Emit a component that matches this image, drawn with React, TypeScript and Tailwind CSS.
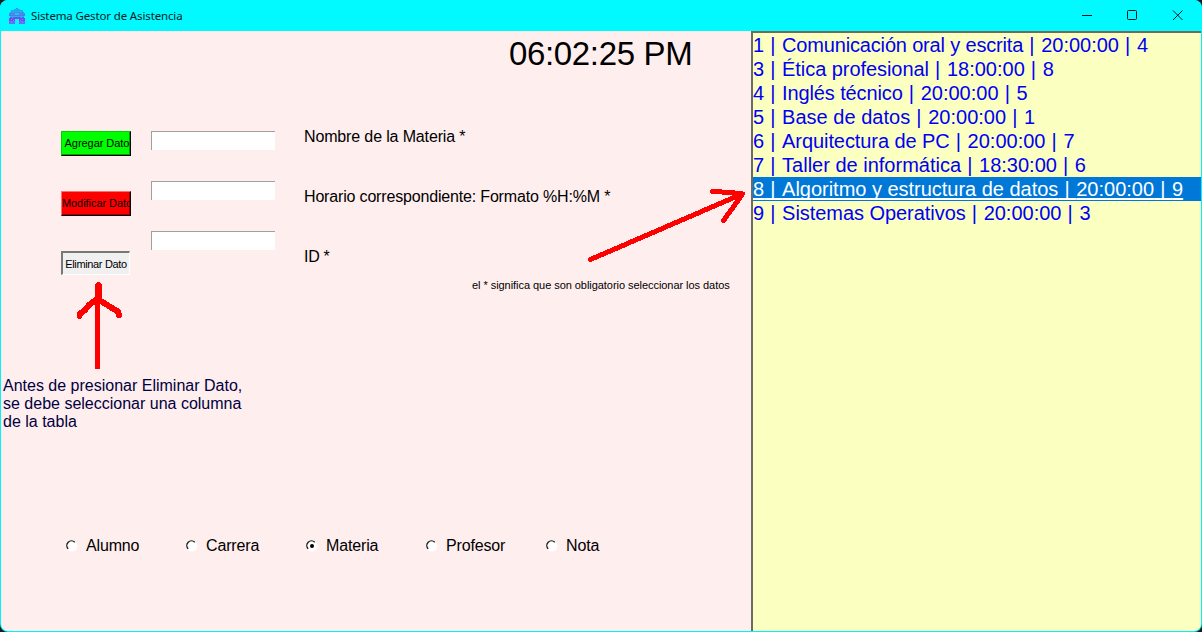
import React from "react";

type TextProps = { children: React.ReactNode; className?: string };

const Line = ({ children, className = "" }: TextProps) => (
  <div className={`whitespace-nowrap ${className}`}>{children}</div>
);

const AppIcon = () => (
  <svg width="16" height="16" viewBox="0 0 16 16" shapeRendering="crispEdges">
    <path fill="#159fe8" d="M7 0h2v1h-2z" />
    <path fill="#2fa4ee" d="M5 1h6v1H5zM2 2h12v2H2z" />
    <path fill="#3f8fe6" d="M1 4h14v1H1zM0 5h6v2H0zM10 5h6v2h-6z" />
    <path fill="#1bc4f5" d="M6 5h4v2H6zM4 3h1v1H4zM11 3h1v1h-1z" />
    <path fill="#4b7de6" d="M0 7h16v1H0z" />
    <path fill="#18b8ef" d="M1 8h14v1H1z" />
    <path fill="#6a55ef" d="M1 9h14v1H1z" />
    <path fill="#7f43f6" d="M0 10h16v1H0zM0 11h6v2H0zM10 11h6v2h-6z" />
    <path fill="#6f6af8" d="M0 13h6v3H0zM10 13h6v3h-6z" />
    <path fill="#26b3f4" d="M2 11h1v1H2zM13 11h1v1h-1zM4 12h1v1H4zM11 12h1v1h-1zM2 14h1v1H2zM13 14h1v1h-1zM3 9h1v1H3zM12 9h1v1h-1z" />
  </svg>
);

const TitleBar = () => (
  <header className="flex h-[31px] shrink-0 items-center bg-[#00faff] pl-[9px]">
    <AppIcon />
    <Line className="ml-[6px] font-['Noto_Sans','Open_Sans',sans-serif] text-[11.5px] tracking-[-0.14px] text-[#051c1d]">
      Sistema Gestor de Asistencia
    </Line>
    <svg className="ml-auto" width="138" height="31" viewBox="0 0 138 31" fill="none" stroke="#00181a">
      <path d="M18 15.5h10" />
      <rect x="63.5" y="10.5" width="9" height="9" rx="1" />
      <path d="M109 10.500l9.500 9.500M118.500 10.500l-9.500 9.500" />
    </svg>
  </header>
);

const ActionButton = ({ label, className }: { label: string; className: string }) => (
  <button
    className={`flex items-center justify-center overflow-hidden whitespace-nowrap text-[11px] leading-none ${className}`}
  >
    {label}
  </button>
);

const Entry = () => (
  <input className="h-[19px] w-[124px] border-t border-l border-[#a0a0a0] bg-white outline-none" />
);

const Radio = ({ label, checked }: { label: string; checked?: boolean }) => (
  <label className="flex h-[18px] w-[120px] items-center">
    <svg width="12" height="12" viewBox="0 0 12 12" className="mr-[8px]">
      <circle cx="6" cy="6" r="5.500" fill="#fff" />
      <path d="M2.200 8.800A4.600 4.600 0 0 1 8.800 2.200" fill="none" stroke="#1c1c1c" strokeWidth="1.400" />
      {checked && <circle cx="6" cy="6" r="2" fill="#000" />}
    </svg>
    <span className="text-[16px] leading-[18px] tracking-[-0.15px]">{label}</span>
  </label>
);

type Subject = { id: number; name: string; time: string; teacher: number; tracking: string };

const subjects: Subject[] = [
  { id: 1, name: "Comunicación oral y escrita", time: "20:00:00", teacher: 4, tracking: "tracking-[-0.17px]" },
  { id: 3, name: "Ética profesional", time: "18:00:00", teacher: 8, tracking: "tracking-[-0.06px]" },
  { id: 4, name: "Inglés técnico", time: "20:00:00", teacher: 5, tracking: "tracking-[-0.12px]" },
  { id: 5, name: "Base de datos", time: "20:00:00", teacher: 1, tracking: "tracking-[0.02px]" },
  { id: 6, name: "Arquitectura de PC", time: "20:00:00", teacher: 7, tracking: "tracking-[-0.08px]" },
  { id: 7, name: "Taller de informática", time: "18:30:00", teacher: 6, tracking: "tracking-[0px]" },
  { id: 8, name: "Algoritmo y estructura de datos", time: "20:00:00", teacher: 9, tracking: "tracking-[-0.02px]" },
  { id: 9, name: "Sistemas Operativos", time: "20:00:00", teacher: 3, tracking: "tracking-[-0.05px]" },
];

const selectedId = 8;

const Pipe = () => <span className="tracking-[0.55px]">{" | "}</span>;

const SubjectList = () => (
  <ul className="w-[450px] border-t-2 border-l-2 border-[#6b6b62] bg-[#fbffc0] text-[20px] leading-[24px] text-[#0000f5]">
    {subjects.map(({ id, name, time, teacher, tracking }) => (
      <li
        key={id}
        className={`h-[24px] whitespace-pre ${
          id === selectedId
            ? "bg-[#0078d7] text-white underline decoration-2 underline-offset-[2px] [text-decoration-skip-ink:none]"
            : ""
        }`}
      >
        {id}
        <Pipe />
        <span className={tracking}>{name}</span>
        <Pipe />
        {time}
        <Pipe />
        {teacher}
      </li>
    ))}
  </ul>
);

const Arrows = () => (
  <svg
    className="pointer-events-none absolute top-0 left-0"
    width="1202"
    height="632"
    fill="none"
    stroke="#ff0000"
    strokeWidth="5"
    strokeLinecap="round"
    strokeLinejoin="round"
    shapeRendering="crispEdges"
  >
    <path d="M590.500 259.500L742 194M712.500 191.500L731 192.500L742.500 194L734 206L723.500 220.500" />
    <path d="M97.500 367V298" />
    <path d="M98.500 285.500V296" strokeWidth="7" />
    <path d="M79.500 316V314L85 310L89 305L97 299L104 303L112 308L118 311.500L119 315" strokeWidth="6" />
  </svg>
);

export default function App() {
  return (
    <div className="h-[632px] w-[1202px] overflow-hidden bg-[#171d20]">
      <div className="relative flex h-full flex-col overflow-hidden rounded-[8px] bg-[#00f4fb] font-['Liberation_Sans',Arial,sans-serif] text-black">
        <TitleBar />
        <div className="mx-px mb-px flex min-h-0 flex-1 overflow-hidden rounded-b-[7px]">
          <main className="flex w-[750px] flex-col bg-[#ffeeee]">
            <Line className="h-[97px] pt-[4px] pl-[508px] text-[33px] leading-[38px] tracking-[-0.35px]">
              06:02:25 PM
            </Line>
            <section className="flex h-[150px] pl-[60px]">
              <div className="mt-[3px] flex w-[90px] flex-col gap-[35px]">
                <ActionButton
                  label="Agregar Dato"
                  className="h-[25px] w-[70px] border-t border-r border-b border-l border-t-[#00d000] border-r-black border-b-black border-l-[#00d000] bg-[#00ff00] pl-[2px] tracking-[-0.05px] shadow-[inset_-1px_-1px_0_#00a000]"
                />
                <ActionButton
                  label="Modificar Dato"
                  className="h-[25px] w-[70px] border-t border-r border-b border-l border-t-[#ff7070] border-r-black border-b-black border-l-[#ff7070] bg-[#ff0000] pl-[2px] tracking-[-0.05px] shadow-[inset_-1px_-1px_0_#a00000]"
                />
                <ActionButton
                  label="Eliminar Dato"
                  className="h-[24px] w-[69px] border-t-2 border-r border-b border-l-2 border-t-[#787878] border-r-white border-b-white border-l-[#787878] bg-[#f0f0f0] pt-[2px] tracking-[-0.35px]"
                />
              </div>
              <div className="mt-[3px] flex w-[153px] flex-col gap-[31px]">
                <Entry />
                <Entry />
                <Entry />
              </div>
              <div className="flex flex-col gap-[42px] text-[16px] leading-[18px]">
                <Line className="tracking-[-0.14px]">Nombre de la Materia *</Line>
                <Line className="tracking-[-0.17px]">Horario correspondiente: Formato %H:%M *</Line>
                <Line className="tracking-[-0.3px]">ID *</Line>
              </div>
            </section>
            <Line className="h-[99px] pt-px pl-[471px] text-[11px] leading-[13px] tracking-[-0.05px]">
              el * significa que son obligatorio seleccionar los datos
            </Line>
            <div className="h-[160px] pl-[2px] text-[16px] leading-[18px] text-[#000040]">
              <Line>Antes de presionar Eliminar Dato,</Line>
              <Line>se debe seleccionar una columna</Line>
              <Line>de la tabla</Line>
            </div>
            <div className="flex pl-[65px]">
              <Radio label="Alumno" />
              <Radio label="Carrera" />
              <Radio label="Materia" checked />
              <Radio label="Profesor" />
              <Radio label="Nota" />
            </div>
          </main>
          <SubjectList />
        </div>
        <Arrows />
      </div>
    </div>
  );
}
